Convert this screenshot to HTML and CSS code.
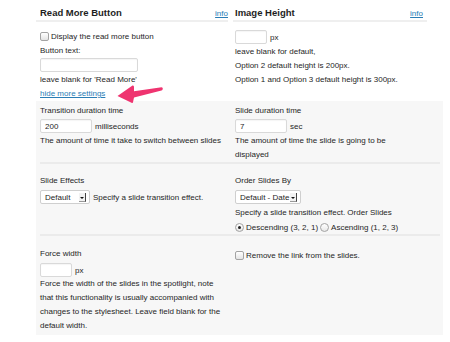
FILE: index.html
```html
<!DOCTYPE html>
<html lang="en">

<head>
  <meta charset="UTF-8" />
  <meta name="viewport" content="width=device-width, initial-scale=1.0" />
  <title>Spotlight Settings</title>
  <link rel="stylesheet" href="styles.css">
</head>

<body>
  <div class="settings">
    <!-- Basic options -->
    <div class="top">
      <div class="col left">
        <div class="head">
          <h3>Read More Button</h3>
          <a href="#" class="info">info</a>
        </div>
        <div class="body">
          <label class="ctl"><span class="check"></span>Display the read more button</label>
          <p class="text gap1">Button text:</p>
          <input type="text" class="field wide">
          <p class="text gap1">leave blank for 'Read More'</p>
          <a href="#" class="toggle">hide more settings</a>
        </div>
      </div>
      <div class="col right">
        <div class="head">
          <h3>Image Height</h3>
          <a href="#" class="info">info</a>
        </div>
        <div class="body">
          <div class="ctl"><input type="text" class="field small"><span class="unit">px</span></div>
          <p class="text gap1">leave blank for default,</p>
          <p class="text">Option 2 default height is 200px.</p>
          <p class="text">Option 1 and Option 3 default height is 300px.</p>
        </div>
      </div>
    </div>

    <!-- Advanced options -->
    <div class="more">
      <div class="row first">
        <div class="cell">
          <p class="text">Transition duration time</p>
          <div class="ctl gap1"><input type="text" class="field mid" value="200"><span class="unit">milliseconds</span></div>
          <p class="text gap1">The amount of time it take to switch between slides</p>
        </div>
        <div class="cell">
          <p class="text">Slide duration time</p>
          <div class="ctl gap1"><input type="text" class="field mid" value="7"><span class="unit">sec</span></div>
          <p class="text gap1">The amount of time the slide is going to be displayed</p>
        </div>
      </div>

      <div class="row second">
        <div class="cell">
          <p class="text">Slide Effects</p>
          <div class="ctl gap2">
            <span class="select short">Default<span class="drop"></span></span>
            <span class="unit">Specify a slide transition effect.</span>
          </div>
        </div>
        <div class="cell">
          <p class="text">Order Slides By</p>
          <div class="ctl gap2">
            <span class="select long">Default - Date<span class="drop"></span></span>
          </div>
          <p class="text gap2">Specify a slide transition effect. Order Slides</p>
          <div class="ctl">
            <span class="radio on"></span>Descending (3, 2, 1)
            <span class="radio"></span>Ascending (1, 2, 3)
          </div>
        </div>
      </div>

      <div class="row third">
        <div class="cell">
          <p class="text">Force width</p>
          <div class="ctl gap2"><input type="text" class="field small"><span class="unit">px</span></div>
          <p class="text">Force the width of the slides in the spotlight, note that this functionality is usually accompanied with changes to the stylesheet. Leave field blank for the default width.</p>
        </div>
        <div class="cell">
          <label class="ctl gap1"><span class="check"></span>Remove the link from the slides.</label>
        </div>
      </div>
    </div>

    <!-- Annotation arrow -->
    <svg class="arrow" width="48" height="22" viewBox="116 83 48 22">
      <path d="M117.5 96 L132.5 85.5 Q134 85 134 87 L134 91.3 L161.5 87.3 Q163 87.3 162.8 88.8 Q162.6 90.3 161.5 90.5 L134 97.4 L133 102.3 Q132.8 103.6 131.5 102.8 Z" fill="#ef3470" />
    </svg>
  </div>
</body>

</html>
```

FILE: styles.css
```css
* {
  margin: 0;
  padding: 0;
  box-sizing: border-box;
}

body {
  background-color: #fff;
  font-family: "Liberation Sans", Arial, sans-serif;
  font-size: 8px;
  color: #262626;
}

.settings {
  position: relative;
  margin-left: 36px;
  width: 407px;
}

/* Top two columns */
.top {
  display: grid;
  grid-template-columns: 197px 1fr;
  height: 101px;
}

.head {
  display: flex;
  justify-content: space-between;
  align-items: baseline;
  padding-top: 6px;
  border-bottom: 2px solid #efefef;
}

.head h3 {
  font-size: 9.5px;
  line-height: 14px;
  font-weight: bold;
  color: #1e1e1e;
}

.info {
  font-size: 8px;
  color: #2a7db5;
}

.left .head {
  margin-right: 5px;
  padding-left: 4px;
}

.left .body {
  padding: 7px 0 0 4px;
}

.right .head {
  margin-right: 16px;
  padding-left: 2px;
  padding-right: 4px;
}

.right .body {
  padding: 8px 0 0 2px;
}

.text {
  line-height: 14px;
}

.gap1 {
  margin-top: 1px;
}

.gap2 {
  margin-top: 2px;
}

.toggle {
  display: block;
  line-height: 14px;
  color: #2a7db5;
}

/* Controls */
.ctl {
  display: flex;
  align-items: center;
  height: 14px;
  white-space: nowrap;
}

.field {
  display: block;
  height: 14px;
  border: 1px solid #d9d9d9;
  border-radius: 2px;
  background-color: #fff;
  box-shadow: inset 0 1px 1px rgba(0, 0, 0, 0.04);
  font-family: inherit;
  font-size: 8px;
  color: #262626;
  padding: 0 4px;
  outline: none;
}

.field.wide {
  width: 98px;
}

.field.mid {
  width: 52px;
}

.field.small {
  width: 32px;
}

.unit {
  margin-left: 3px;
}

.check {
  display: inline-block;
  width: 9px;
  height: 9px;
  margin-right: 2px;
  border: 1px solid #a3a3a3;
  border-radius: 2px;
  background: linear-gradient(#fff, #e4e4e4);
}

.radio {
  display: inline-block;
  position: relative;
  width: 9px;
  height: 9px;
  margin-right: 2px;
  border: 1px solid #a3a3a3;
  border-radius: 50%;
  background: linear-gradient(#fff, #e8e8e8);
}

.ctl .radio:not(:first-child) {
  margin-left: 2px;
}

.radio.on::after {
  content: "";
  position: absolute;
  left: 2px;
  top: 2px;
  width: 3px;
  height: 3px;
  border-radius: 50%;
  background-color: #222;
}

.select {
  display: flex;
  align-items: center;
  justify-content: space-between;
  height: 14px;
  padding: 0 3px 0 4px;
  border: 1px solid #cfcfcf;
  border-radius: 2px;
  background-color: #fff;
  color: #1e1e1e;
}

.select.short {
  width: 50px;
}

.select.long {
  width: 66px;
}

.drop {
  position: relative;
  width: 7px;
  height: 9px;
  background-color: #f2f2f2;
  border-right: 1px solid #444;
  border-bottom: 1px solid #999;
}

.drop::after {
  content: "";
  position: absolute;
  left: 1px;
  top: 4px;
  border-left: 2px solid transparent;
  border-right: 2px solid transparent;
  border-top: 2px solid #111;
}

/* Grey advanced block */
.more {
  background-color: #f7f7f7;
  padding: 0 3px 0 4px;
}

.row {
  display: grid;
  grid-template-columns: 195px 1fr;
  border-bottom: 2px solid #ebebeb;
}

.row .cell:first-child {
  padding-right: 10px;
}

.row .cell:last-child {
  padding-right: 20px;
}

.first {
  padding-top: 3px;
}

.second {
  padding-top: 10px;
}

.third {
  padding-top: 11px;
  padding-bottom: 2px;
  border-bottom: none;
}

.arrow {
  position: absolute;
  left: 80px;
  top: 83px;
}
```
